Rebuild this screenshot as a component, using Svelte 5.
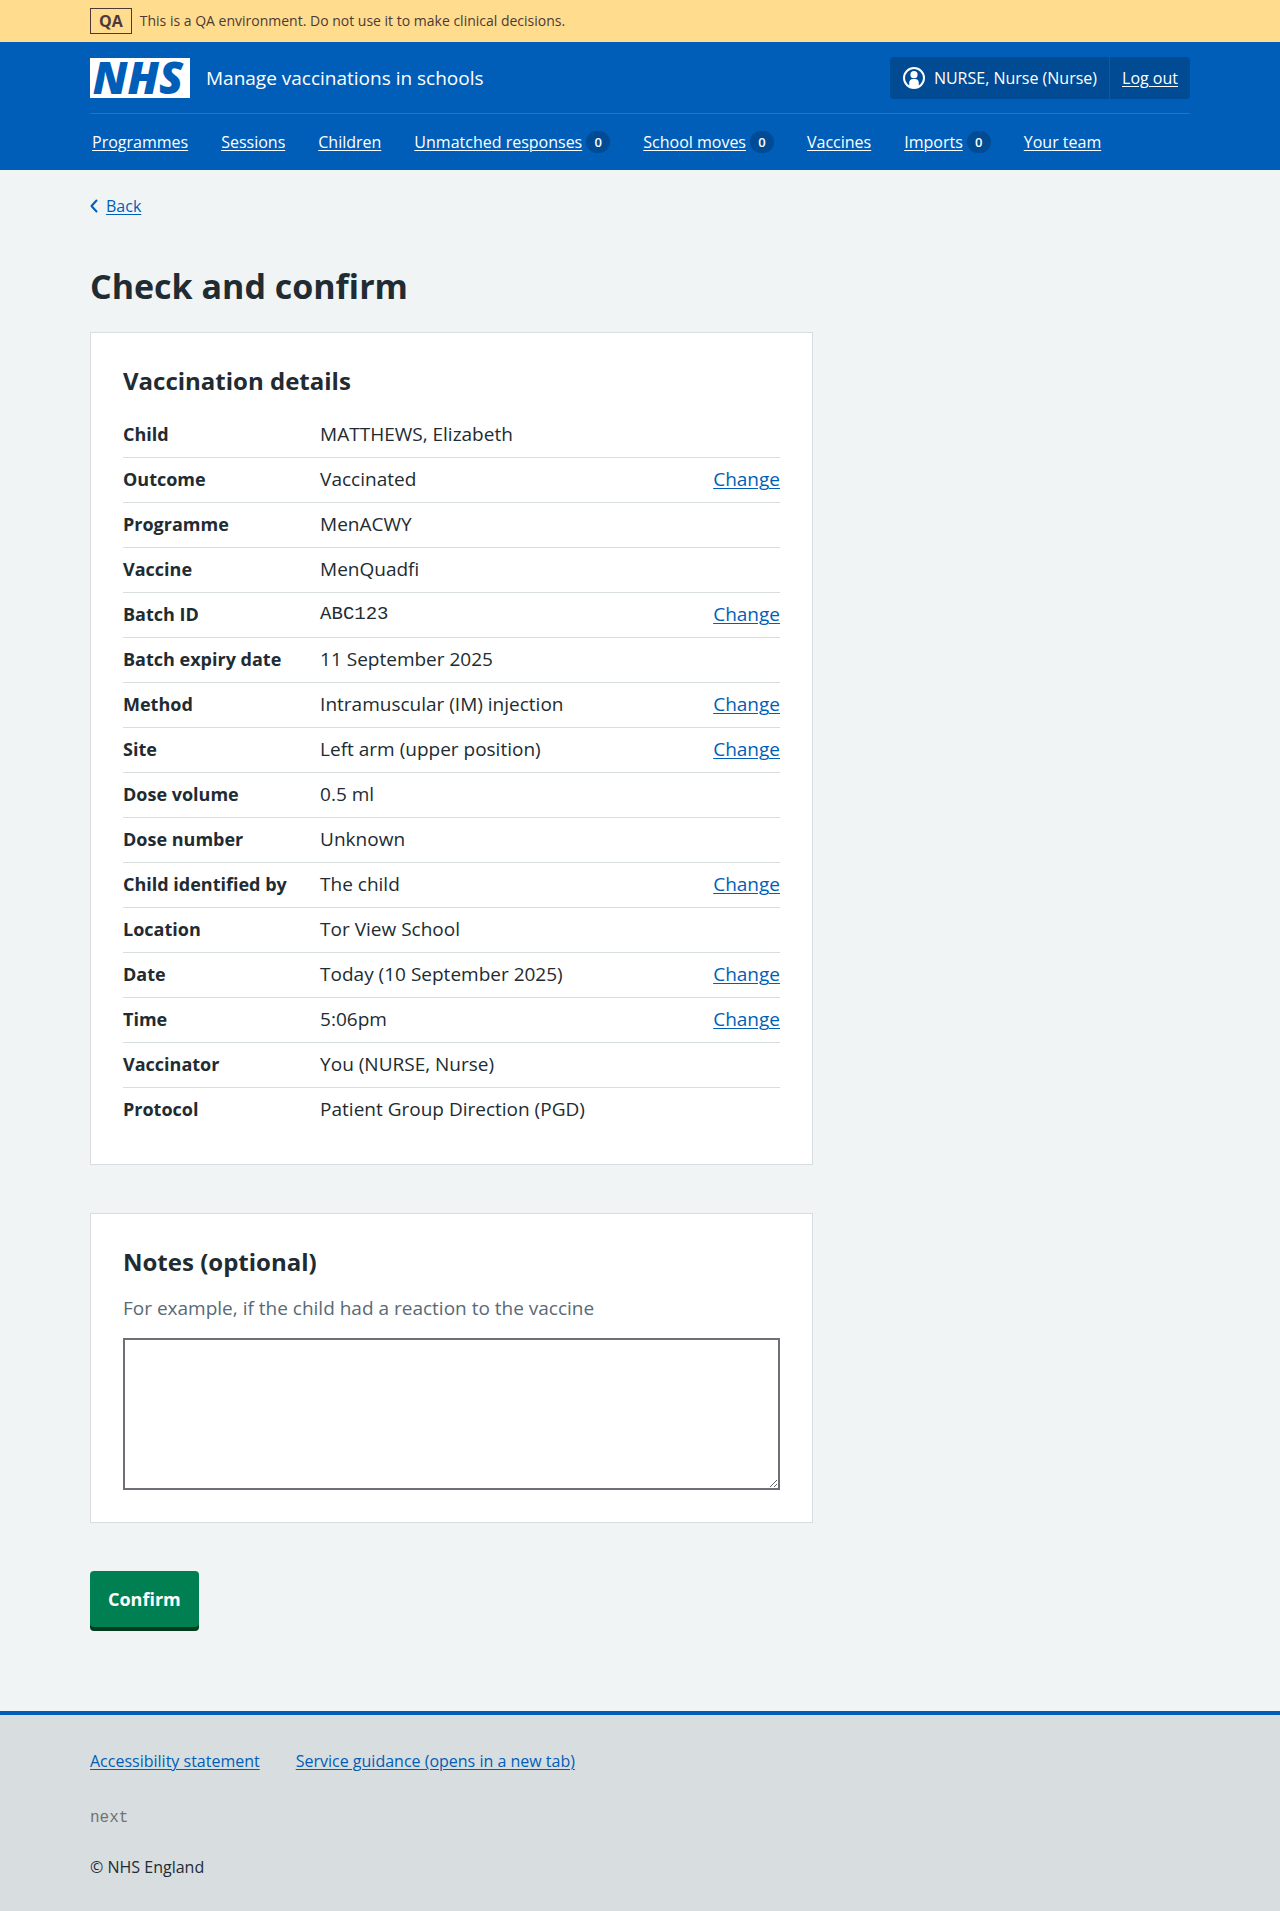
<script>
  const navItems = [
    { label: 'Programmes' },
    { label: 'Sessions' },
    { label: 'Children' },
    { label: 'Unmatched responses', count: 0 },
    { label: 'School moves', count: 0 },
    { label: 'Vaccines' },
    { label: 'Imports', count: 0 },
    { label: 'Your team' }
  ];

  const rows = [
    { key: 'Child', value: 'MATTHEWS, Elizabeth' },
    { key: 'Outcome', value: 'Vaccinated', change: true },
    { key: 'Programme', value: 'MenACWY' },
    { key: 'Vaccine', value: 'MenQuadfi' },
    { key: 'Batch ID', value: 'ABC123', change: true, mono: true },
    { key: 'Batch expiry date', value: '11 September 2025' },
    { key: 'Method', value: 'Intramuscular (IM) injection', change: true },
    { key: 'Site', value: 'Left arm (upper position)', change: true },
    { key: 'Dose volume', value: '0.5 ml' },
    { key: 'Dose number', value: 'Unknown' },
    { key: 'Child identified by', value: 'The child', change: true },
    { key: 'Location', value: 'Tor View School' },
    { key: 'Date', value: 'Today (10 September 2025)', change: true },
    { key: 'Time', value: '5:06pm', change: true },
    { key: 'Vaccinator', value: 'You (NURSE, Nurse)' },
    { key: 'Protocol', value: 'Patient Group Direction (PGD)' }
  ];

  let notes = $state('');
</script>

<div class="page">
  <div class="environment">
    <div class="container environment-inner">
      <strong class="tag">QA</strong>
      <span>This is a QA environment. Do not use it to make clinical decisions.</span>
    </div>
  </div>

  <header class="header">
    <div class="container">
      <div class="header-top">
        <a class="brand" href="#home">
          <svg class="logo" viewBox="0 0 100 40" role="img" aria-label="NHS">
            <rect width="100" height="40" fill="#fff" />
            <text class="logo-text" x="48" y="36" text-anchor="middle">NHS</text>
          </svg>
          <span class="service">Manage vaccinations in schools</span>
        </a>
        <div class="account">
          <span class="user">
            <svg class="user-icon" viewBox="0 0 24 24" aria-hidden="true">
              <circle cx="12" cy="12" r="10" fill="none" stroke="#fff" stroke-width="2" />
              <circle cx="12" cy="8.700" r="3.600" fill="#fff" />
              <path d="M7.200 20v-3.200c0-2.200 1.500-3.800 3.700-3.800h2.200c2.200 0 3.700 1.600 3.700 3.800V20c-1.400 1-3 1.600-4.800 1.600S8.600 21 7.200 20z" fill="#fff" />
            </svg>
            NURSE, Nurse (Nurse)
          </span>
          <a class="logout" href="#logout">Log out</a>
        </div>
      </div>
      <nav class="nav" aria-label="Menu">
        {#each navItems as item}
          <span class="nav-item">
            <a href="#nav">{item.label}</a>
            {#if item.count !== undefined}<span class="count">{item.count}</span>{/if}
          </span>
        {/each}
      </nav>
    </div>
  </header>

  <main class="container main">
    <a class="back" href="#back">
      <svg class="chevron" viewBox="0 0 8 14" aria-hidden="true">
        <path d="M6.500 1.500 1.500 7l5 5.500" fill="none" stroke="currentColor" stroke-width="2" stroke-linecap="round" stroke-linejoin="round" />
      </svg>
      <span>Back</span>
    </a>

    <h1>Check and confirm</h1>

    <form class="column" onsubmit={(e) => e.preventDefault()}>
      <section class="card">
        <h2>Vaccination details</h2>
        <dl>
          {#each rows as row}
            <div class="row">
              <dt>{row.key}</dt>
              <dd class="value" class:mono={row.mono}>{row.value}</dd>
              {#if row.change}
                <dd><a href="#change" aria-label="Change {row.key}">Change</a></dd>
              {/if}
            </div>
          {/each}
        </dl>
      </section>

      <section class="card">
        <h2><label for="notes">Notes (optional)</label></h2>
        <p class="hint" id="notes-hint">For example, if the child had a reaction to the vaccine</p>
        <textarea id="notes" rows="5" aria-describedby="notes-hint" bind:value={notes}></textarea>
      </section>

      <button type="submit">Confirm</button>
    </form>
  </main>

  <footer class="footer">
    <div class="container">
      <div class="footer-links">
        <a href="#accessibility">Accessibility statement</a>
        <a href="#guidance">Service guidance (opens in a new tab)</a>
      </div>
      <p class="version">next</p>
      <p>© NHS England</p>
    </div>
  </footer>
</div>

<style>
  :global(body) {
    margin: 0;
    background: #d8dde0;
  }

  .page {
    background: #f0f4f5;
    color: #212b32;
    font-family: 'Open Sans', 'Noto Sans', sans-serif;
    font-size: 19px;
    line-height: 28px;
  }

  .container {
    box-sizing: border-box;
    max-width: 1164px;
    margin: 0 auto;
    padding: 0 32px;
  }

  h1, h2, p, dl, dd {
    margin: 0;
  }

  a {
    color: #005eb8;
    text-underline-offset: 2px;
    text-decoration-thickness: 1px;
  }

  .environment {
    background: #ffdc8e;
    color: #4d3a36;
    font-size: 14px;
    line-height: 24px;
  }

  .environment-inner {
    display: flex;
    align-items: center;
    gap: 8px;
    padding-top: 8px;
    padding-bottom: 8px;
  }

  .tag {
    border: 1px solid currentColor;
    padding: 0 8px;
    font-size: 16px;
    font-weight: 700;
  }

  .header {
    background: #005eb8;
    color: #fff;
    font-size: 16px;
    line-height: 24px;
  }

  .header a {
    color: #fff;
  }

  .header-top {
    display: flex;
    align-items: center;
    justify-content: space-between;
    padding: 15px 0 14px;
    border-bottom: 1px solid #2673c1;
  }

  .brand {
    display: flex;
    align-items: center;
    gap: 16px;
    text-decoration: none;
  }

  .logo {
    width: 100px;
    height: 40px;
    overflow: visible;
  }

  .logo-text {
    fill: #005eb8;
    font-family: 'Open Sans', sans-serif;
    font-size: 44px;
    font-style: italic;
    font-weight: 800;
  }

  .service {
    font-size: 19px;
  }

  .account {
    display: flex;
    background: #004b93;
    border-radius: 4px;
  }

  .user,
  .logout {
    display: flex;
    align-items: center;
    padding: 9px 12px;
  }

  .user {
    gap: 8px;
    border-right: 1px solid #005eb8;
  }

  .user-icon {
    width: 24px;
    height: 24px;
  }

  .nav {
    display: flex;
    flex-wrap: wrap;
    gap: 0 33px;
    padding: 16px 2px;
  }

  .nav-item {
    display: flex;
    align-items: center;
    gap: 4px;
  }

  .count {
    min-width: 24px;
    border-radius: 12px;
    background: #004b93;
    font-size: 13px;
    font-weight: 600;
    line-height: 22px;
    text-align: center;
  }

  .main {
    padding-bottom: 80px;
  }

  .back {
    display: inline-flex;
    align-items: center;
    gap: 8px;
    margin-top: 24px;
    font-size: 16px;
    line-height: 24px;
    text-decoration: none;
  }

  .back span {
    text-decoration: underline;
  }

  .chevron {
    width: 8px;
    height: 14px;
  }

  h1 {
    margin: 42px 0 22px;
    font-size: 34px;
    font-weight: 700;
    line-height: 48px;
  }

  h2 {
    margin-bottom: 16px;
    font-size: 24px;
    font-weight: 700;
    line-height: 32px;
  }

  .column {
    display: flex;
    flex-direction: column;
    align-items: flex-start;
    gap: 48px;
    max-width: 723px;
  }

  .card {
    box-sizing: border-box;
    width: 100%;
    padding: 32px;
    border: 1px solid #d8dde0;
    background: #fff;
  }

  .row {
    display: flex;
    padding: 7px 0 9px;
    border-bottom: 1px solid #d8dde0;
  }

  .row:last-child {
    border-bottom: 0;
  }

  dt {
    flex: 0 0 30%;
    font-size: 18px;
    font-weight: 700;
  }

  .value {
    flex: 1;
  }

  .mono,
  .version {
    font-family: 'Liberation Mono', monospace;
  }

  .hint {
    margin-bottom: 16px;
    color: #596a76;
  }

  textarea {
    box-sizing: border-box;
    display: block;
    width: 100%;
    height: 152px;
    padding: 4px;
    border: 2px solid #6f7077;
    border-radius: 0;
    background: #fff;
    color: inherit;
    font: inherit;
    resize: vertical;
  }

  button {
    padding: 14px 18px;
    margin-bottom: 4px;
    border: 0;
    border-radius: 4px;
    background: #007f53;
    box-shadow: 0 4px 0 #003d1e;
    color: #fff;
    font: inherit;
    font-size: 18px;
    font-weight: 700;
  }

  .footer {
    padding: 34px 0 31px;
    border-top: 4px solid #005eb8;
    background: #d8dde0;
    font-size: 16px;
    line-height: 24px;
  }

  .footer-links {
    display: flex;
    flex-wrap: wrap;
    gap: 8px 36px;
    margin-bottom: 33px;
  }

  .version {
    margin-bottom: 25px;
    color: #6f7377;
  }
</style>
